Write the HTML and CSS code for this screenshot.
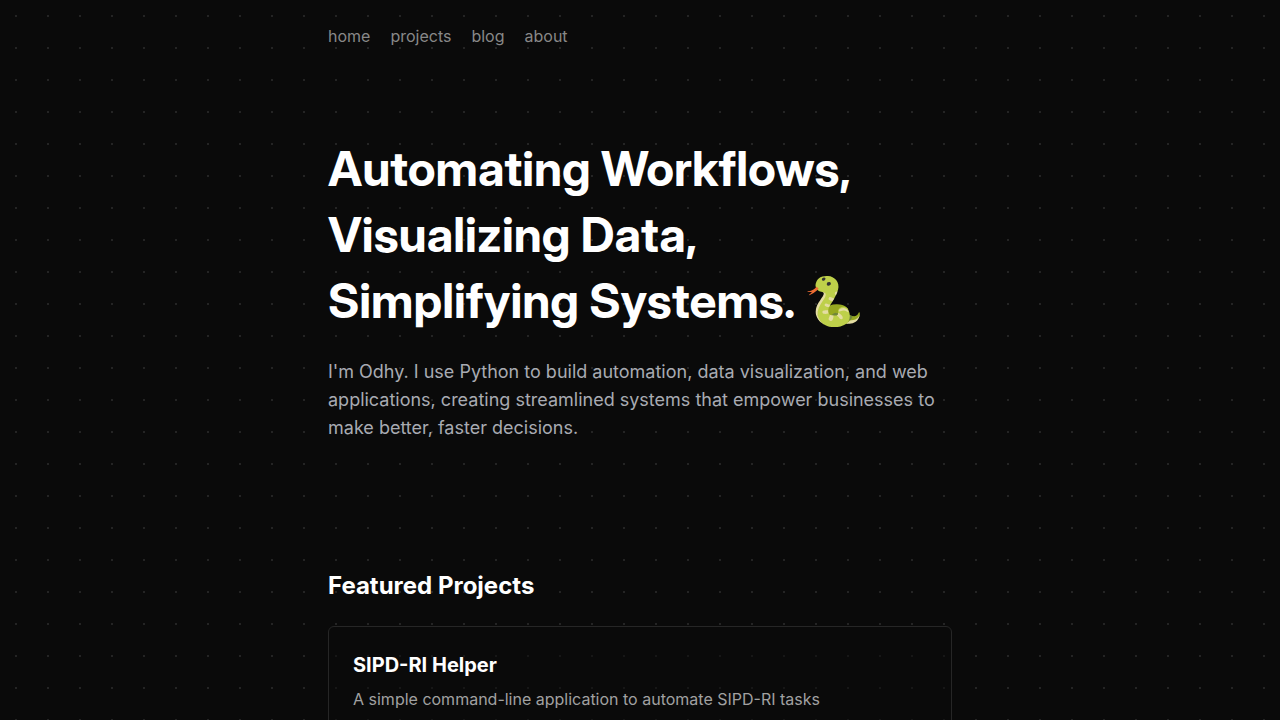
FILE: index.html
```html
<!DOCTYPE html>
<html lang="en">
<head>
<meta charset="utf-8">
<meta name="viewport" content="width=device-width, initial-scale=1">
<title>Odhy</title>
<link rel="stylesheet" href="styles.css">
</head>
<body>
<div class="page">
  <nav class="nav" aria-label="Main">
    <a href="#home">home</a>
    <a href="#projects">projects</a>
    <a href="#blog">blog</a>
    <a href="#about">about</a>
  </nav>
  <main>
    <section class="hero">
      <h1 class="hero-title">Automating Workflows, Visualizing Data, Simplifying Systems. 🐍</h1>
      <p class="hero-text">I'm Odhy. I use Python to build automation, data visualization, and web applications, creating streamlined systems that empower businesses to make better, faster decisions.</p>
    </section>
    <section class="projects" id="projects">
      <h2 class="section-title">Featured Projects</h2>
      <a class="card" href="#sipd">
        <h3 class="card-title">SIPD-RI Helper</h3>
        <p class="card-text">A simple command-line application to automate SIPD-RI tasks</p>
      </a>
    </section>
  </main>
</div>
</body>
</html>
```

FILE: styles.css
```css
* { box-sizing: border-box; margin: 0; }
html { scrollbar-width: none; }
body {
  background-color: #0a0a0a;
  background-image: radial-gradient(circle at center, #242424 1px, transparent 1px);
  background-size: 32px 32px;
  color: #fff;
  font-family: Inter, "Liberation Sans", sans-serif;
  font-size: 16px;
  line-height: 24px;
}
a { color: inherit; text-decoration: none; }
.page { max-width: 672px; margin: 0 auto; padding: 24px; }
.nav { display: flex; gap: 20px; color: #888; }
.hero { padding: 88px 0 96px; }
.hero-title { font-family: "Inter Display", Inter, sans-serif; font-size: 48px; line-height: 66px; font-weight: 700; }
.hero-text { margin-top: 24px; color: #a8abb2; font-size: 18px; line-height: 28px; }
.projects { padding-top: 32px; }
.section-title { font-size: 24px; line-height: 32px; font-weight: 700; }
.card {
  display: block;
  margin-top: 24px;
  padding: 24px;
  background: rgb(10 10 10 / 50%);
  border: 1px solid #262626;
  border-radius: 6px;
}
.card-title { font-size: 20px; line-height: 28px; font-weight: 700; }
.card-text { margin-top: 8px; color: #a1a1a1; }
```
